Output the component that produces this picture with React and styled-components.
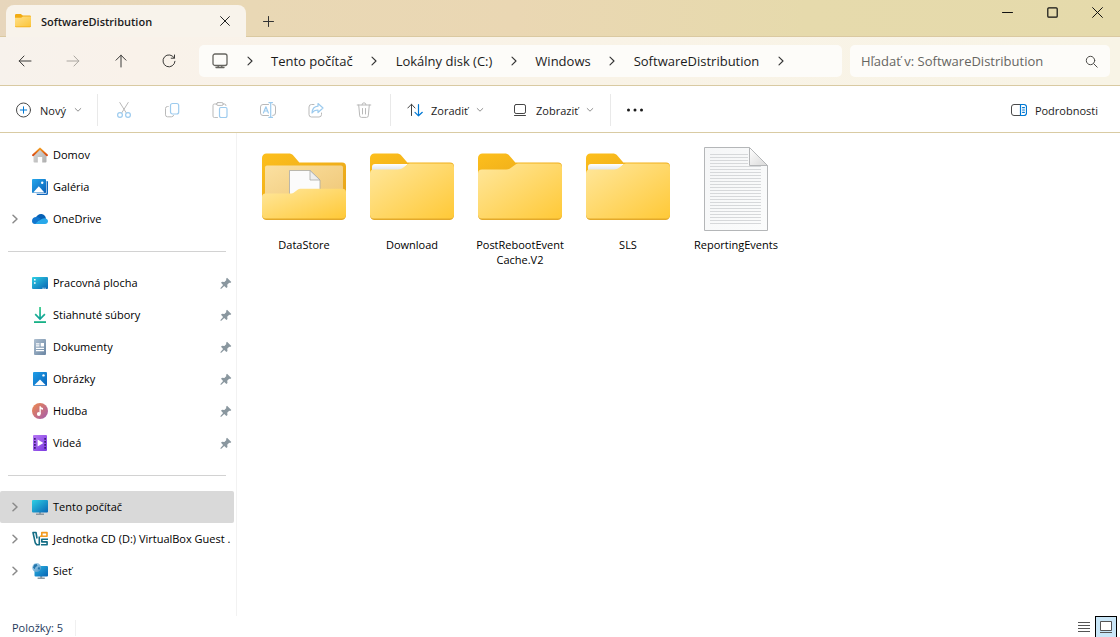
import React from "react";
import styled, { createGlobalStyle } from "styled-components";

const GlobalStyle = createGlobalStyle`
  *, *::before, *::after { box-sizing: border-box; }
  body {
    margin: 0;
    background: #ffffff;
    color: #1b1b1b;
    font-family: "Open Sans", "Noto Sans", sans-serif;
    font-size: 11px;
    line-height: 16px;
  }
  button, input { font: inherit; color: inherit; }
  svg { display: block; flex: none; }
  ul, ol { list-style: none; margin: 0; padding: 0; }
`;

const Window = styled.div`
  display: flex;
  flex-direction: column;
  min-height: 100vh;
`;

const PlainButton = styled.button`
  display: flex;
  align-items: center;
  justify-content: center;
  flex: none;
  padding: 0;
  border: 0;
  background: transparent;
`;

/* Title bar */

const TitleBar = styled.header`
  display: flex;
  align-items: flex-end;
  height: 37px;
  padding-left: 6px;
  border-bottom: 1px solid #dac9a1;
  background: linear-gradient(90deg, #e7d6bc 0%, #e9d8b5 22%, #ead7b3 46%, #e6daac 72%, #e5daab 100%);
`;

const Tab = styled.div`
  display: flex;
  align-items: center;
  width: 240px;
  height: 32px;
  margin-bottom: -1px;
  padding: 0 11px 0 9px;
  border-radius: 8px 8px 0 0;
  background: #f8f3eb;
`;

const TabTitle = styled.span`
  flex: 1;
  padding: 2px 0 0 10px;
  font-weight: 600;
`;

const TabClose = styled(PlainButton)`
  width: 20px;
  height: 24px;
`;

const NewTab = styled(PlainButton)`
  width: 32px;
  height: 30px;
  margin-left: 6px;
`;

const Captions = styled.div`
  display: flex;
  align-self: flex-start;
  margin-left: auto;
`;

const CaptionButton = styled(PlainButton)`
  width: 45px;
  height: 25px;
`;

/* Navigation bar */

const NavBar = styled.div`
  display: flex;
  align-items: center;
  gap: 8px;
  height: 49px;
  padding: 0 10px 0 1px;
  border-bottom: 1px solid #d9caa2;
  background: linear-gradient(90deg, #f7f2ec 0%, #f9f2ea 12%, #f9f3e7 50%, #f8f4e6 100%);
`;

const NavButtons = styled.div`
  display: flex;
  width: 190px;
`;

const NavButton = styled(PlainButton)`
  width: 48px;
  height: 32px;
`;

const AddressBar = styled.nav`
  display: flex;
  align-items: center;
  flex: 1;
  height: 32px;
  padding-left: 13px;
  border-radius: 5px;
  background: #fdfcf9;
  font-size: 13px;
  line-height: 20px;
`;

const Crumbs = styled.ol`
  display: flex;
  align-items: center;
`;

const Crumb = styled.li`
  display: flex;
  align-items: center;
  a { color: inherit; text-decoration: none; white-space: nowrap; }
`;

const CrumbArrow = styled.span`
  display: flex;
  justify-content: center;
  width: 43px;
`;

const SearchBox = styled.label`
  display: flex;
  align-items: center;
  width: 260px;
  height: 32px;
  padding: 0 12px 0 11px;
  border-radius: 5px;
  background: #fdfcf9;
`;

const SearchInput = styled.input`
  flex: 1;
  min-width: 0;
  padding: 0;
  border: 0;
  outline: 0;
  background: transparent;
  font-size: 13px;
  line-height: 20px;
  &::placeholder { color: #666561; opacity: 1; }
`;

/* Command bar */

const CommandBar = styled.div`
  display: flex;
  align-items: center;
  height: 47px;
  padding: 2px 22px 0 15px;
  border-bottom: 1px solid #d9cba3;
  background: #ffffff;
`;

const TextCommand = styled(PlainButton)`
  gap: 8px;
  justify-content: flex-start;
  width: ${(p) => p.$width || "auto"};
  height: 32px;
  margin-left: ${(p) => (p.$end ? "auto" : "0")};
  padding-left: ${(p) => p.$inset || "0"};
  span { padding-top: 2px; }
`;

const IconCommand = styled(PlainButton)`
  width: 48px;
  height: 32px;
`;

const IconGroup = styled.div`
  display: flex;
  padding: 0 2px;
`;

const Separator = styled.span`
  width: 1px;
  height: 32px;
  background: #e9e9e9;
`;

/* Body */

const Body = styled.div`
  display: flex;
  flex: 1;
`;

const Sidebar = styled.nav`
  flex: none;
  width: 237px;
  padding-top: 6px;
  border-right: 1px solid #f2f2f2;
  color: #000000;
`;

const TreeRow = styled.li`
  display: flex;
  align-items: center;
  height: 32px;
  margin-right: 2px;
  padding-right: ${(p) => (p.$pinned ? "2px" : "0")};
  border-radius: 2px;
  background: ${(p) => (p.$selected ? "#d9d9d9" : "transparent")};
`;

const Expander = styled(PlainButton)`
  width: 29px;
  height: 32px;
  margin-right: 3px;
`;

const Indent = styled.span`
  flex: none;
  width: 32px;
`;

const TreeLink = styled.a`
  display: flex;
  align-items: center;
  flex: 1;
  min-width: 0;
  gap: 5px;
  overflow: hidden;
  color: inherit;
  text-decoration: none;
  white-space: nowrap;
`;

const TreeDivider = styled.li`
  height: 32px;
  margin: 0 10px 0 8px;
  padding-top: 16px;
  &::before { content: ""; display: block; height: 1px; background: #d2d2d2; }
`;

const Files = styled.ul`
  display: flex;
  flex-wrap: wrap;
  align-content: flex-start;
  flex: 1;
  padding: 14px 13px 0;
  color: #000000;
`;

const FileItem = styled.li`
  display: flex;
  flex-direction: column;
  align-items: center;
  width: 108px;
`;

const FileName = styled.span`
  max-width: 104px;
  margin-top: 6px;
  text-align: center;
  line-height: 15px;
`;

const StatusBar = styled.footer`
  display: flex;
  align-items: flex-end;
  height: 21px;
  padding: 0 3px 0 12px;
  color: #1e395b;
`;

const StatusCount = styled.span`
  margin-bottom: 1px;
  padding-right: 12px;
  border-right: 1px solid #f0f0f0;
`;

const ViewModes = styled.div`
  display: flex;
  margin-left: auto;
`;

const ViewMode = styled(PlainButton)`
  width: 22px;
  height: 21px;
  border: ${(p) => (p.$active ? "1px solid #000000" : "0")};
  border-bottom: 0;
  background: ${(p) => (p.$active ? "#c9e6f7" : "transparent")};
`;

/* Line icons */

const Line = ({ w = 16, h = 16, color = "#3b3a38", sw = 1, children }) => (
  <svg width={w} height={h} viewBox={`0 0 ${w} ${h}`} fill="none" stroke={color} strokeWidth={sw} strokeLinecap="round" strokeLinejoin="round" aria-hidden="true">
    {children}
  </svg>
);

const Chevron = ({ color = "#333333", sw = 1.1 }) => (
  <Line w={8} h={10} color={color} sw={sw}><path d="M2 1.200 6 5 2 8.800" /></Line>
);
const ChevronDown = () => (
  <Line w={8} h={6} color="#8f8f8f"><path d="M1.200 1.500 4 4.200 6.800 1.500" /></Line>
);
const CloseIcon = ({ size = 10, color = "#222222" }) => (
  <Line w={size} h={size} color={color}><path d={`M.6.6 ${size - 0.6} ${size - 0.6}M${size - 0.6}.6.6 ${size - 0.6}`} /></Line>
);

const grey = "#b9b9b9";
const paleBlue = "#9dcbee";
const blue = "#0078d4";

const CutIcon = () => (
  <Line color={grey}>
    <path d="M3.800.5 10.200 10.800M12.200.5 5.800 10.800" />
    <g stroke={paleBlue} strokeWidth="1.200"><circle cx="4" cy="13" r="2.400" /><circle cx="12" cy="13" r="2.400" /></g>
  </Line>
);
const CopyIcon = () => (
  <Line color={grey}>
    <path d="M4.200 4.500H3.500a2 2 0 0 0-2 2v6.300a2 2 0 0 0 2 2h4.100a2 2 0 0 0 2-1.500" />
    <rect x="6.500" y="1.500" width="8.200" height="10.500" rx="2" stroke={paleBlue} strokeWidth="1.200" />
  </Line>
);
const PasteIcon = () => (
  <Line color={grey}>
    <path d="M5 2H2.500a1.500 1.500 0 0 0-1.500 1.500v10.600a1.500 1.500 0 0 0 1.500 1.500h3M11 2h1.500A1.500 1.500 0 0 1 14 3.500" />
    <rect x="4.500" y=".6" width="6.800" height="2.800" rx="1.400" />
    <rect x="7.500" y="5.500" width="7.500" height="10" rx="1.400" stroke={paleBlue} strokeWidth="1.200" />
  </Line>
);
const RenameIcon = () => (
  <Line color={grey}>
    <path d="M8.500 2.500H3a2.500 2.500 0 0 0-2.500 2.500v6A2.500 2.500 0 0 0 3 13.500h5.500M12.800 2.500A2.500 2.500 0 0 1 15.500 5v6a2.500 2.500 0 0 1-2.700 2.500" />
    <path stroke={paleBlue} strokeWidth="1.200" d="M3.400 11 5.900 4.800 8.400 11M4.300 9h3.200M10.700.6v14.800M8.900.6h3.600M8.900 15.400h3.600" />
  </Line>
);
const ShareIcon = () => (
  <Line color={grey}>
    <path d="M6 2.500H3.500A2.500 2.500 0 0 0 1 5v7.500A2.500 2.500 0 0 0 3.500 15H11a2.500 2.500 0 0 0 2.500-2.500V11" />
    <path stroke={paleBlue} strokeWidth="1.200" d="M10 1.500 15 6l-5 4.500V8C7 8 5.300 9 4 11c.2-3.600 2.200-6.500 6-6.800z" />
  </Line>
);
const DeleteIcon = () => (
  <Line color={grey}>
    <path d="M1.200 3h13.600M6 2.800a2 2 0 0 1 4 0M2.700 3l1 10.800a1.800 1.800 0 0 0 1.800 1.600h5a1.800 1.800 0 0 0 1.800-1.600l1-10.800M6.500 6.500v5.500M9.500 6.500v5.500" />
  </Line>
);
const NewIcon = () => (
  <Line w={17} color="#4a4a4a">
    <circle cx="8.500" cy="8" r="7" />
    <path stroke={blue} d="M8.500 4.800v6.400M5.300 8h6.400" />
  </Line>
);
const SortIcon = () => (
  <Line color="#444444">
    <path d="M4.500 13.500V2.200M.8 6 4.500 2.200 8 6" />
    <path stroke={blue} strokeWidth="1.200" d="M11.500 2.500v11.300M8 10.300l3.500 3.500 3.800-3.500" />
  </Line>
);
const ViewIcon = () => (
  <Line color="#444444"><rect x="2.500" y="2.500" width="11" height="9" rx="1.600" /><path d="M2.500 13.500h11" /></Line>
);
const DetailsIcon = () => (
  <Line color="#4a4a4a">
    <path d="M9.500 2.500H3A2.500 2.500 0 0 0 .5 5v6A2.500 2.500 0 0 0 3 13.500h6.500" />
    <path stroke={blue} strokeWidth="1.200" d="M9.500 2.500H13A2.500 2.500 0 0 1 15.500 5v6a2.500 2.500 0 0 1-2.500 2.500H9.500zM11.600 5.700h1.800M11.600 8h1.800M11.600 10.300h1.800" />
  </Line>
);
const MonitorIcon = () => (
  <Line color="#66645f" sw={1.3}>
    <rect x="1" y="1" width="14" height="11.500" rx="2" />
    <path d="M6.200 12.800v1.500M9.800 12.800v1.500M4 14.500h8" />
  </Line>
);

/* Sidebar icons */

const Art = ({ w = 16, h = 16, children }) => (
  <svg width={w} height={h} viewBox={`0 0 ${w} ${h}`} aria-hidden="true">{children}</svg>
);
const Grad = ({ id, from, to, vertical }) => (
  <linearGradient id={id} x1="0" y1="0" x2={vertical ? "0" : "1"} y2="1">
    <stop offset="0" stopColor={from} />
    <stop offset="1" stopColor={to} />
  </linearGradient>
);

const HomeIcon = () => (
  <Art>
    <defs><Grad id="home" from="#dddddd" to="#adadad" /><Grad id="roof" from="#f29a1f" to="#d9480f" vertical /></defs>
    <path fill="url(#home)" d="M1.500 8 8 2l6.500 6v6.600a1 1 0 0 1-1 1h-3.300V10H5.800v5.600H2.500a1 1 0 0 1-1-1z" />
    <path fill="none" stroke="url(#roof)" strokeWidth="1.900" strokeLinecap="round" strokeLinejoin="round" d="M1 8.200 8 1.600l7 6.600" />
  </Art>
);
const GalleryIcon = () => (
  <Art>
    <defs><Grad id="gal" from="#24a8ec" to="#0a5fb8" /></defs>
    <path fill="#1268bd" d="M4 13.500h9.500V2h1.500a1 1 0 0 1 1 1v11.500a1.500 1.500 0 0 1-1.500 1.500H5z" />
    <path stroke="#fff" strokeWidth=".8" d="M14.200 1v13.400H3" fill="none" />
    <rect width="14" height="14" rx="1" fill="url(#gal)" />
    <path fill="#fff" d="M1.200 13.500 6.800 7.200l5.600 6.300z" />
    <circle cx="10.200" cy="3.800" r="1.200" fill="#fff" />
  </Art>
);
const CloudIcon = () => (
  <Art>
    <path fill="#0761b5" d="M3.500 7.500C4.500 4.300 7 2.800 9.500 3c2.500.3 4 2 4.500 4.500L9 11z" />
    <path fill="#1175ce" d="M0 10c0-2.700 2-4 4.500-3.900 1.500 0 2.500.7 4 1.700l-4 5.200H3C1.200 13 0 11.700 0 10z" />
    <path fill="#28a8ea" d="M3 13c1.500-1.500 6-5.600 9.500-5.800C14.500 7.200 16 8.600 16 10.200S14.700 13 13 13z" />
  </Art>
);
const DesktopIcon = () => (
  <Art>
    <defs><Grad id="desk" from="#2fd0e4" to="#0863b3" /></defs>
    <rect y="2" width="16" height="12" rx="1" fill="url(#desk)" />
    <path fill="#fff" d="M2 4h1.600v1.600H2zM2 7.200h1.600v1.600H2zM10.500 12.800h1.200v1h-1.200zM12.500 12.800h1.200v1h-1.200z" />
  </Art>
);
const DownloadIcon = () => (
  <Art>
    <defs><Grad id="down" from="#2ecb85" to="#0c9b9c" vertical /></defs>
    <path fill="url(#down)" d="M7.200 0h1.700v10l3.400-3.400 1.200 1.200L8 13.300 2.600 7.800l1.200-1.200L7.200 10z" />
    <path fill="#17b186" d="M2 14.200h12V16H2z" />
  </Art>
);
const DocsIcon = () => (
  <Art>
    <defs><Grad id="docs" from="#aebfd0" to="#6a86a3" /></defs>
    <rect x="2" width="12" height="16" rx="1" fill="url(#docs)" />
    <path fill="#fff" d="M4 4.200h3.500v1.200H4zM4 6.300h3.500v1.200H4zM8.700 4h3.300v3.500H8.700zM4 8.700h8v1.200H4zM4 11h8v1.200H4z" />
  </Art>
);
const PicturesIcon = () => (
  <Art>
    <defs><Grad id="pic" from="#1f9ee8" to="#0863b9" /></defs>
    <rect x="1" y="1" width="14" height="14" rx="1" fill="url(#pic)" />
    <path fill="#fff" d="M2.200 14.200 8 8.400l5.800 5.800z" />
    <circle cx="11.500" cy="4.400" r="1.200" fill="#fff" />
  </Art>
);
const MusicIcon = () => (
  <Art>
    <defs><Grad id="mus" from="#f08a4b" to="#a35bb0" /></defs>
    <circle cx="8" cy="8" r="8" fill="url(#mus)" />
    <circle cx="6.800" cy="11" r="1.900" fill="#fff" />
    <path fill="#fff" d="M7.500 3.200h1.200c.3 1 1.100 1.600 2.300 1.700v1.800c-.9 0-1.700-.2-2.200-.7V11H7.500z" />
  </Art>
);
const VideoIcon = () => (
  <Art>
    <defs><Grad id="vid" from="#b878f5" to="#7a3ae0" /></defs>
    <rect x="1" y="0" width="14" height="16" rx="1" fill="url(#vid)" />
    <path fill="#3d1c78" d="M2 3h1.700v1.800H2zM2 6h1.700v1.800H2zM2 9h1.700v1.800H2zM2 12h1.700v1.800H2zM12.300 3H14v1.800h-1.700zM12.300 6H14v1.800h-1.700zM12.300 9H14v1.800h-1.700zM12.300 12H14v1.800h-1.700z" />
    <path fill="#fff" d="M5.600 4.500 11.400 8l-5.800 3.500z" />
  </Art>
);
const ComputerIcon = () => (
  <Art>
    <defs><Grad id="pc" from="#2fd0e4" to="#0966b5" /></defs>
    <path fill="#8b98a2" d="M7 12h2v2.600h3V16H4v-1.400h3z" />
    <rect y="1" width="16" height="12.500" rx="1" fill="url(#pc)" />
  </Art>
);
const VBoxIcon = () => (
  <Art>
    <g fill="none" strokeWidth="1.600" strokeLinejoin="round">
      <path stroke="#146d85" d="M5 7.500 4 1.500H1l2.200 10.200 1.500 2h2.600V5.500" />
      <path stroke="#f39a1e" d="M9.800 5.200V1.600H15v3.600zM8 5.200h2" />
      <path stroke="#146d85" d="M16 8.200H9.800v2.700h5.300v2.800H9" />
    </g>
  </Art>
);
const NetworkIcon = () => (
  <Art>
    <defs><Grad id="net" from="#2bb6e3" to="#0863b3" /><Grad id="globe" from="#c9e4f5" to="#3d8ec4" /></defs>
    <path fill="#8b98a2" d="M8.200 12h2v2.600h2.600V16H5.600v-1.400h2.600z" />
    <rect x="2.500" y="3" width="13.500" height="10.500" rx="1" fill="url(#net)" />
    <circle cx="4.600" cy="4.600" r="4.500" fill="url(#globe)" />
    <path fill="#2477ae" d="M2 1.600 4.700 1l.8 1.800-2 1.400-.7 2L1 4.700zM6.200 4.200l2 .4-.7 2.200-1.800-.7z" />
  </Art>
);
const PinIcon = () => (
  <Art w={12} h={12}>
    <path fill="#8a979f" d="M7 .8 11.300 5l-1.100 1-1-.3-2 2 .3 2.300-1.100 1.100-2.200-2.200L1 11.900.3 11.200 3.100 8 1 5.800l1.100-1.100 2.300.3 2-2L6 1.900z" />
  </Art>
);

/* File icons */

const SmallFolder = () => (
  <Art w={16} h={14}>
    <defs><Grad id="sf" from="#ffe08a" to="#fbc53a" /></defs>
    <path fill="#f2ab12" d="M0 1.200A1.200 1.200 0 0 1 1.200 0h4.600l2 1.500h7A1.200 1.200 0 0 1 16 2.700V12a1.200 1.200 0 0 1-1.200 1.200H1.200A1.200 1.200 0 0 1 0 12z" />
    <path fill="url(#sf)" d="M0 3.800h6.200L8 2.400h8v9.300a.8.800 0 0 1-.8.800H.8a.8.800 0 0 1-.8-.8z" />
  </Art>
);

const FolderIcon = ({ id, paper }) => (
  <Art w={84} h={84}>
    <defs>
      <Grad id={`${id}f`} from="#ffe79c" to="#ffc937" />
      <Grad id={`${id}b`} from="#fdbf1c" to="#e5a21a" />
      <Grad id={`${id}p`} from="#ffffff" to="#dfe4ea" vertical />
    </defs>
    <path fill={`url(#${id}b)`} d="M0 11a4.500 4.500 0 0 1 4.500-4.500h22c2 0 3.500.6 4.800 2l6 6.900H80a4 4 0 0 1 4 4V40H0z" />
    {paper && <path fill={`url(#${id}p)`} d="M2 20a3 3 0 0 1 3-3h33l-6 6H2z" />}
    <path fill="#e3a92a" d="M0 50v18.500a4.500 4.500 0 0 0 4.500 4.500h75a4.500 4.500 0 0 0 4.500-4.500V50z" />
    <path fill={`url(#${id}f)`} d="M0 26.500a4 4 0 0 1 4-4h24c2 0 3.600-.5 5-1.700l4.500-3.200c1-.7 2-1 3.400-1H80a4 4 0 0 1 4 4V67.500a4 4 0 0 1-4 4H4a4 4 0 0 1-4-4z" />
  </Art>
);

const OpenFolderIcon = () => (
  <Art w={84} h={84}>
    <defs>
      <Grad id="of" from="#ffe79c" to="#ffc937" />
      <Grad id="ob" from="#fdbf1c" to="#e5a21a" />
      <Grad id="oi" from="#fbe0a0" to="#eec574" />
    </defs>
    <path fill="url(#ob)" d="M0 11a4.500 4.500 0 0 1 4.500-4.500h22c2 0 3.500.6 4.800 2l6 6.900H80a4 4 0 0 1 4 4V60H0z" />
    <rect x="3" y="18.500" width="78" height="40" rx="2" fill="url(#oi)" />
    <path fill="#fbfbfb" stroke="#aaa9a5" strokeWidth=".8" d="M27.500 23.500H48l10 9.500v20H27.500z" />
    <path fill="#eeeeee" stroke="#aaa9a5" strokeWidth=".8" d="M48 23.500V33h10z" />
    <path fill="#e3a92a" d="M0 55v13.500a4.500 4.500 0 0 0 4.500 4.500h75a4.500 4.500 0 0 0 4.500-4.500V55z" />
    <path fill="url(#of)" d="M0 50a3.500 3.500 0 0 1 3.500-3.500H28c2 0 3.300-.5 4.600-1.500l3-2.200c1-.8 2-1 3.400-1h41.500A3.500 3.500 0 0 1 84 45.300V67.500a4 4 0 0 1-4 4H4a4 4 0 0 1-4-4z" />
  </Art>
);

const TextFileIcon = () => (
  <Art w={64} h={84}>
    <defs><Grad id="tf" from="#f5f6f7" to="#fbfcfc" /><Grad id="fold" from="#ffffff" to="#d8d8d8" /></defs>
    <path fill="url(#tf)" stroke="#b4b6b8" d="M.5.500h45l18 18v65H.5z" />
    <path stroke="#d6d8da" strokeWidth="1" fill="none" d={Array.from({ length: 24 }, (_, i) => `M6 ${7.5 + i * 3}h${i < 4 ? 38 : 51}`).join("")} />
    <path fill="url(#fold)" stroke="#b4b6b8" d="M45.500.500v18h18z" />
  </Art>
);

const crumbs = ["Tento počítač", "Lokálny disk (C:)", "Windows", "SoftwareDistribution"];

const tree = [
  { name: "Domov", Icon: HomeIcon },
  { name: "Galéria", Icon: GalleryIcon },
  { name: "OneDrive", Icon: CloudIcon, expandable: true },
  { divider: true },
  { name: "Pracovná plocha", Icon: DesktopIcon, pinned: true },
  { name: "Stiahnuté súbory", Icon: DownloadIcon, pinned: true },
  { name: "Dokumenty", Icon: DocsIcon, pinned: true },
  { name: "Obrázky", Icon: PicturesIcon, pinned: true },
  { name: "Hudba", Icon: MusicIcon, pinned: true },
  { name: "Videá", Icon: VideoIcon, pinned: true },
  { divider: true },
  { name: "Tento počítač", Icon: ComputerIcon, expandable: true, selected: true },
  { name: "Jednotka CD (D:) VirtualBox Guest .", Icon: VBoxIcon, expandable: true },
  { name: "Sieť", Icon: NetworkIcon, expandable: true },
];

const files = [
  { name: "DataStore", icon: <OpenFolderIcon /> },
  { name: "Download", icon: <FolderIcon id="dl" paper /> },
  { name: <>PostRebootEvent<br />Cache.V2</>, icon: <FolderIcon id="pr" /> },
  { name: "SLS", icon: <FolderIcon id="sls" paper /> },
  { name: "ReportingEvents", icon: <TextFileIcon /> },
];

const editCommands = [
  ["Vystrihnúť", CutIcon],
  ["Kopírovať", CopyIcon],
  ["Prilepiť", PasteIcon],
  ["Premenovať", RenameIcon],
  ["Zdieľať", ShareIcon],
  ["Odstrániť", DeleteIcon],
];

export default function App() {
  return (
    <Window>
      <GlobalStyle />
      <TitleBar>
        <Tab>
          <SmallFolder />
          <TabTitle>SoftwareDistribution</TabTitle>
          <TabClose aria-label="Zavrieť kartu"><CloseIcon /></TabClose>
        </Tab>
        <NewTab aria-label="Nová karta"><Line w={11} h={11} color="#333333"><path d="M5.500.5v10M.5 5.500h10" /></Line></NewTab>
        <Captions>
          <CaptionButton aria-label="Minimalizovať"><Line w={11} h={11} color="#111111"><path d="M.5 5.500h10" /></Line></CaptionButton>
          <CaptionButton aria-label="Maximalizovať"><Line w={11} h={11} color="#111111" sw={1.2}><rect x=".8" y=".8" width="9.400" height="9.400" rx="1" /></Line></CaptionButton>
          <CaptionButton aria-label="Zavrieť"><CloseIcon size={11} color="#111111" /></CaptionButton>
        </Captions>
      </TitleBar>

      <NavBar>
        <NavButtons>
          <NavButton aria-label="Späť"><Line><path d="M14 8H2.200M7 3 2.200 8 7 13" /></Line></NavButton>
          <NavButton aria-label="Dopredu" disabled><Line color="#aaa6a0"><path d="M2 8h11.800M9 3l4.800 5L9 13" /></Line></NavButton>
          <NavButton aria-label="Nahor"><Line><path d="M8 14V2.200M3 7.200l5-5 5 5" /></Line></NavButton>
          <NavButton aria-label="Obnoviť"><Line><path d="M13.300 5A6 6 0 1 0 14 8.300M13.500 2v3.200h-3.300" /></Line></NavButton>
        </NavButtons>
        <AddressBar aria-label="Cesta">
          <MonitorIcon />
          <Crumbs>
            <Crumb><CrumbArrow><Chevron /></CrumbArrow></Crumb>
            {crumbs.map((c) => (
              <Crumb key={c}><a href="#">{c}</a><CrumbArrow><Chevron /></CrumbArrow></Crumb>
            ))}
          </Crumbs>
        </AddressBar>
        <SearchBox>
          <SearchInput type="text" aria-label="Hľadať" placeholder="Hľadať v: SoftwareDistribution" />
          <Line w={13} h={13} color="#4c4b48"><circle cx="5.500" cy="5.500" r="4.200" /><path d="m8.700 8.700 3.500 3.500" /></Line>
        </SearchBox>
      </NavBar>

      <CommandBar>
        <TextCommand $width="82px"><NewIcon /><span>Nový</span><ChevronDown /></TextCommand>
        <Separator />
        <IconGroup>
          {editCommands.map(([name, Icon]) => (
            <IconCommand key={name} aria-label={name} disabled><Icon /></IconCommand>
          ))}
        </IconGroup>
        <Separator />
        <TextCommand $width="105px" $inset="16px"><SortIcon /><span>Zoradiť</span><ChevronDown /></TextCommand>
        <TextCommand $width="114px" $inset="16px"><ViewIcon /><span>Zobraziť</span><ChevronDown /></TextCommand>
        <Separator />
        <IconCommand aria-label="Ďalšie možnosti">
          <Art w={18} h={4}><g fill="#1b1b1b"><circle cx="2.500" cy="2" r="1.500" /><circle cx="9" cy="2" r="1.500" /><circle cx="15.500" cy="2" r="1.500" /></g></Art>
        </IconCommand>
        <TextCommand $end><DetailsIcon /><span>Podrobnosti</span></TextCommand>
      </CommandBar>

      <Body>
        <Sidebar aria-label="Navigácia">
          <ul>
            {tree.map((t, i) =>
              t.divider ? (
                <TreeDivider key={i} />
              ) : (
                <TreeRow key={i} $selected={t.selected} $pinned={t.pinned}>
                  {t.expandable ? <Expander aria-label="Rozbaliť"><Chevron color="#8a8a8a" sw={1.5} /></Expander> : <Indent />}
                  <TreeLink href="#"><t.Icon /><span>{t.name}</span></TreeLink>
                  {t.pinned && <PinIcon />}
                </TreeRow>
              )
            )}
          </ul>
        </Sidebar>
        <Files>
          {files.map((f, i) => (
            <FileItem key={i}>{f.icon}<FileName>{f.name}</FileName></FileItem>
          ))}
        </Files>
      </Body>

      <StatusBar>
        <StatusCount>Položky: 5</StatusCount>
        <ViewModes>
          <ViewMode aria-label="Podrobnosti"><Line w={12} h={11} color="#555555"><path strokeLinecap="butt" d="M0 1.500h12M0 4.500h12M0 7.500h12M0 10.500h12" /></Line></ViewMode>
          <ViewMode $active aria-label="Veľké ikony"><Line w={12} h={12} color="#555555"><path strokeLinecap="butt" strokeLinejoin="miter" fill="#ffffff" d="M.5.500h11v9H.5zM0 11.500h12" /></Line></ViewMode>
        </ViewModes>
      </StatusBar>
    </Window>
  );
}
